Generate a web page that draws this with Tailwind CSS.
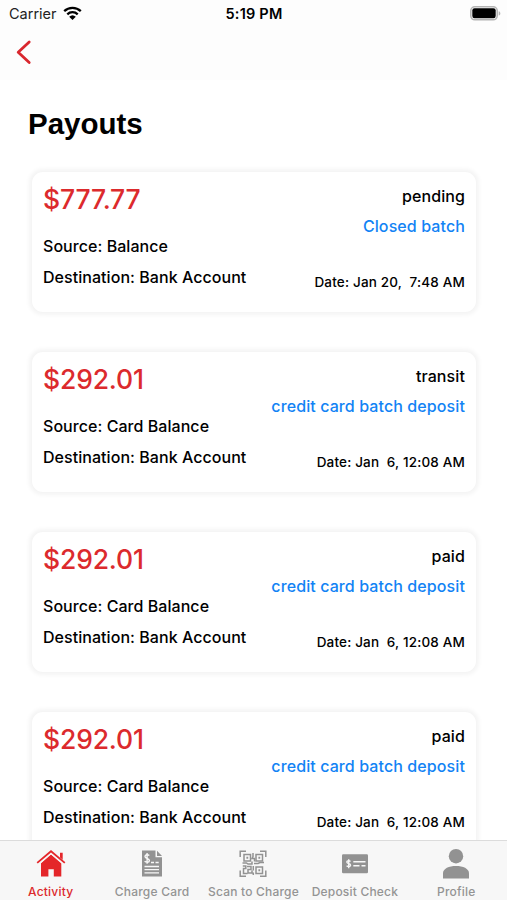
<!DOCTYPE html>
<html lang="en">

<head>
    <meta charset="UTF-8">
    <meta name="viewport" content="width=device-width, initial-scale=1.0">
    <title>Payouts</title>
    <script src="https://cdn.jsdelivr.net/npm/@tailwindcss/browser@4"></script>
</head>

<body class="bg-white">
    <div class="h-[900px] w-[507px] flex flex-col overflow-hidden font-['Inter',sans-serif] text-black">
        <header class="shrink-0 bg-[#fdfdfd] h-20">
            <div class="h-7 pl-[9px] pr-[6px] grid grid-cols-3 items-center">
                <div class="flex items-center gap-[6px]">
                    <span class="text-[14.5px] text-[#222]">Carrier</span>
                    <svg class="w-[19px] h-[14px] -mt-[3px]" viewBox="0 0 19 14" fill="none" stroke="#000" stroke-width="2.3"><path d="M1.2 5.2a12 12 0 0 1 16.6 0M4.3 8.3a7.5 7.5 0 0 1 10.4 0"/><path fill="#000" stroke="none" d="M9.5 14 6.2 10.7a4.8 4.8 0 0 1 6.6 0z"/></svg>
                </div>
                <span class="text-[14.5px] font-semibold text-center tracking-[0.2px] whitespace-nowrap -ml-[2px]">5:19 PM</span>
                <svg class="w-[31px] h-[15px] justify-self-end -mt-[2px]" viewBox="0 0 31 15"><rect x=".8" y=".8" width="26.4" height="13" rx="4" fill="#fff" stroke="#b4b4b4" stroke-width="1.6"/><rect x="2.3" y="2.3" width="23.4" height="10" rx="2.2"/><path d="M28.7 5.2c2.2.7 2.2 3.7 0 4.4z" fill="#b4b4b4"/></svg>
            </div>
            <button type="button" class="block ml-4 mt-3" aria-label="Back">
                <svg class="w-[16px] h-[25px]" viewBox="0 0 16 25" fill="none" stroke="#d9272e" stroke-width="2.8" stroke-linecap="round" stroke-linejoin="round"><path d="M13.2 2 2.2 12.3 13.2 22.6"/></svg>
            </button>
        </header>

        <main class="flex-1 min-h-0 overflow-hidden px-8">
            <h1 class="-ml-[4px] mt-[34px] mb-[38px] h-5 flex items-center font-['Liberation_Sans',sans-serif] text-[29.5px] font-bold">Payouts</h1>

            <div class="flex flex-col gap-10 font-medium text-[16px] leading-[31px] w-[444px]">
                <article class="h-[140px] shrink-0 rounded-[11px] bg-white shadow-[0_0_4px_3px_#f4f4f4] px-[11px] flex justify-between">
                    <div class="pt-[11px] tracking-[0.05px]">
                        <p class="text-[26.5px] leading-8 tracking-[-0.15px] text-[#dc2a2d] mb-4">$777.77</p>
                        <p>Source: Balance</p>
                        <p>Destination: Bank Account</p>
                    </div>
                    <div class="pt-[9px] text-right leading-[30px] tracking-[0.1px]">
                        <p>pending</p>
                        <p class="text-[#1283f5]">Closed batch</p>
                        <p class="text-[13.5px] mt-[26px] tracking-[0.17px]">Date: Jan 20,&nbsp; 7:48 AM</p>
                    </div>
                </article>
                <article class="h-[140px] shrink-0 rounded-[11px] bg-white shadow-[0_0_4px_3px_#f4f4f4] px-[11px] flex justify-between">
                    <div class="pt-[11px] tracking-[0.05px]">
                        <p class="text-[26.5px] leading-8 tracking-[-0.15px] text-[#dc2a2d] mb-4">$292.01</p>
                        <p>Source: Card Balance</p>
                        <p>Destination: Bank Account</p>
                    </div>
                    <div class="pt-[9px] text-right leading-[30px] tracking-[0.1px]">
                        <p>transit</p>
                        <p class="text-[#1283f5]">credit card batch deposit</p>
                        <p class="text-[13.5px] mt-[26px] tracking-[0.17px]">Date: Jan&nbsp; 6, 12:08 AM</p>
                    </div>
                </article>
                <article class="h-[140px] shrink-0 rounded-[11px] bg-white shadow-[0_0_4px_3px_#f4f4f4] px-[11px] flex justify-between">
                    <div class="pt-[11px] tracking-[0.05px]">
                        <p class="text-[26.5px] leading-8 tracking-[-0.15px] text-[#dc2a2d] mb-4">$292.01</p>
                        <p>Source: Card Balance</p>
                        <p>Destination: Bank Account</p>
                    </div>
                    <div class="pt-[9px] text-right leading-[30px] tracking-[0.1px]">
                        <p>paid</p>
                        <p class="text-[#1283f5]">credit card batch deposit</p>
                        <p class="text-[13.5px] mt-[26px] tracking-[0.17px]">Date: Jan&nbsp; 6, 12:08 AM</p>
                    </div>
                </article>
                <article class="h-[140px] shrink-0 rounded-[11px] bg-white shadow-[0_0_4px_3px_#f4f4f4] px-[11px] flex justify-between">
                    <div class="pt-[11px] tracking-[0.05px]">
                        <p class="text-[26.5px] leading-8 tracking-[-0.15px] text-[#dc2a2d] mb-4">$292.01</p>
                        <p>Source: Card Balance</p>
                        <p>Destination: Bank Account</p>
                    </div>
                    <div class="pt-[9px] text-right leading-[30px] tracking-[0.1px]">
                        <p>paid</p>
                        <p class="text-[#1283f5]">credit card batch deposit</p>
                        <p class="text-[13.5px] mt-[26px] tracking-[0.17px]">Date: Jan&nbsp; 6, 12:08 AM</p>
                    </div>
                </article>
            </div>
        </main>

        <nav class="h-[60px] shrink-0 bg-[#f7f7f7] border-t border-[#dcdcdc] grid grid-cols-5 text-[12px] tracking-[0.2px] font-medium text-[#949494] whitespace-nowrap">
            <a class="flex flex-col items-center pt-2 text-[#dc2a2d]">
                <svg class="w-[30px] h-[30px]" viewBox="0 0 30 30" fill="#e4262a"><path d="M15 5.6 25.3 14.2V27.5H17.8V20.3H12.4V27.5H5V14.2z"/><path d="M24 3.8h2.7v7.4L24 9z"/><path d="M1.6 14.5 15 3l13.4 11.5" fill="none" stroke="#f7f7f7" stroke-width="3.6"/><path d="M1.2 13.9 15 2.2l13.8 11.7" fill="none" stroke="#e4262a" stroke-width="1.8"/></svg>
                <span class="leading-[25px]">Activity</span>
            </a>
            <a class="flex flex-col items-center pt-2">
                <svg class="w-[30px] h-[30px]" viewBox="0 0 30 30" fill="#929292"><path d="M5 1.5h13.5v6.8H25v19.2H5z"/><path d="M20 1.7 25 6.9h-5z"/><path d="M12.3 6.6C10.6 5 8 5.7 8 7.6c0 2.3 4.4 1.5 4.4 3.9 0 2-3 2.3-4.8.8M10.1 4v10.7" fill="none" stroke="#f7f7f7" stroke-width="1.4"/><path d="M14 13.5h3M18.5 13.5h3.2M7.5 17.5h14.5M7.5 20.7h14.5M7.5 23.9h14.5" fill="none" stroke="#f7f7f7" stroke-width="1.3"/></svg>
                <span class="leading-[25px]">Charge Card</span>
            </a>
            <a class="flex flex-col items-center pt-2">
                <svg class="w-[30px] h-[30px]" viewBox="0 0 30 30" fill="none" stroke="#929292" stroke-width="1.5"><path d="M2.2 8V2.2H8M22 2.2h5.8V8M27.8 21.5v5.8H22M8 27.3H2.2v-5.8"/><path d="M6 5.5h6.5v6.5H6zM18 5.5h6.5v6.5H18zM18 18h6.5v6.5H18z"/><path d="M8.4 8.7h1.8M20.4 8.7h1.8M20.4 21.3h1.8" stroke-width="2"/><path d="M15 4v3.5l-1 2h2.5v3M4.5 14h4l1.5 1h4v-2.5M16 14.5h4l2-1h4M4.8 17h3v2.5H5.5v5h4M9 17.5h4v3h-3v3.5h4v-2.5M15.3 17v4.5M15.3 23.5v2.5"/></svg>
                <span class="leading-[25px]">Scan to Charge</span>
            </a>
            <a class="flex flex-col items-center pt-2">
                <svg class="w-[30px] h-[30px]" viewBox="0 0 30 30"><rect x="2" y="5.3" width="26" height="19" rx="1.2" fill="#929292"/><g fill="none" stroke="#f7f7f7" stroke-width="1.4"><path d="M10.5 12.4c-1.3-1.2-3.7-.9-3.7.6 0 1.8 3.8 1.2 3.8 3.2 0 1.5-2.5 1.8-4 .5M8.7 10.3v8.9"/><path d="M13.3 12.7h12.2M13.3 16.7h6.2M21.5 16.7h4"/></g></svg>
                <span class="leading-[25px]">Deposit Check</span>
            </a>
            <a class="flex flex-col items-center pt-2">
                <svg class="w-[30px] h-[30px]" viewBox="0 0 30 30" fill="#929292"><circle cx="15" cy="7.2" r="7.2"/><path d="M2 29.500v-5.200C2 19.500 8 17 15 17s13 2.500 13 7.300v5.200z"/></svg>
                <span class="leading-[25px]">Profile</span>
            </a>
        </nav>
    </div>
</body>

</html>
